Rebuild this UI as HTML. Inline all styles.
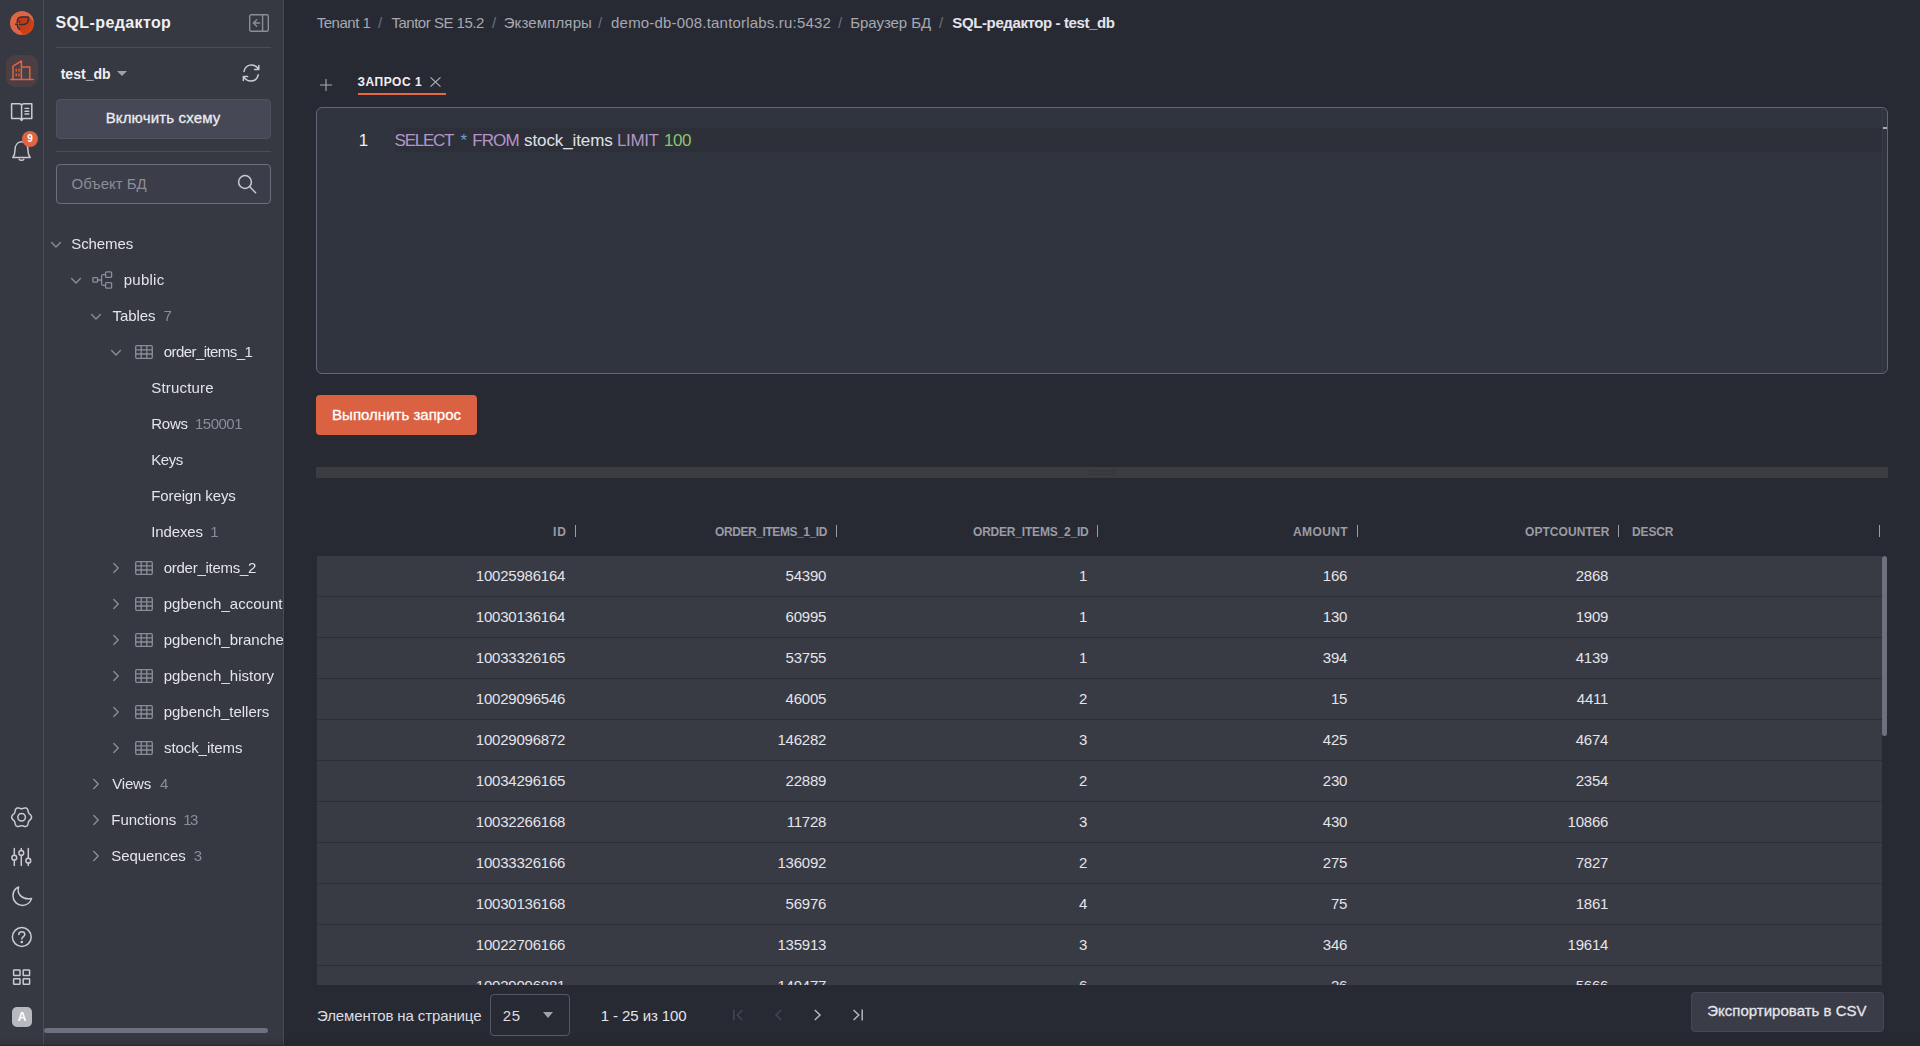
<!DOCTYPE html>
<html lang="ru">
<head>
<meta charset="utf-8">
<title>SQL-редактор - test_db</title>
<style>
*{box-sizing:border-box;margin:0;padding:0}
html,body{width:1920px;height:1046px;overflow:hidden;background:#282a33}
body{font-family:"Liberation Sans",sans-serif;color:#e4e4e9;font-size:15px;position:relative}
.abs{position:absolute}
.t{position:absolute;white-space:nowrap;line-height:20px;height:20px;font-size:15px;color:#e4e4e9}
svg{position:absolute;overflow:visible}
#rail{left:0;top:0;width:44px;height:1046px;background:#363842;border-right:1px solid #4a4c5b}
#side{left:44px;top:0;width:240px;height:1046px;background:#363842;border-right:1px solid #4a4c5b;overflow:hidden}
#main{left:284px;top:0;width:1636px;height:1046px;background:#282a33}
.ic{stroke:#c9cad3;fill:none;stroke-width:1.5;stroke-linecap:round;stroke-linejoin:round}
.hr{position:absolute;left:12px;width:215px;height:1px;background:#4a4c5b}
.chev{stroke:#8b8d97;fill:none;stroke-width:1.4;stroke-linecap:round;stroke-linejoin:round}
.tbl{stroke:#8b8d97;fill:none;stroke-width:1.3}
.row{position:absolute;left:33px;width:1565px;height:41px;background:#383a44;border-bottom:1px solid #2c2e37}
.c{top:10px;letter-spacing:-0.22px;margin-right:0.8px}
.sep{position:absolute;top:525px;width:1px;height:12px;background:#9a9ca6}
</style>
</head>
<body>
<div id="rail" class="abs">
<!-- logo -->
<svg style="left:10px;top:11px" width="24" height="24" viewBox="0 0 24 24">
<defs><linearGradient id="lg" x1="0" y1="0" x2="1" y2="1"><stop offset="0" stop-color="#b83614"/><stop offset="1" stop-color="#e2491a"/></linearGradient><clipPath id="lc"><circle cx="12" cy="12" r="12"/></clipPath></defs>
<circle cx="12" cy="12" r="12" fill="#de6443"/>
<g clip-path="url(#lc)"><path d="M7.5 8 L12 5.5 L18.6 5.5 L30 17 L18 30 L9.4 18.8 Z" fill="url(#lg)"/></g>
<path d="M9.6 18.3C8.2 17.6 7.5 15.6 7.3 13.4L5.6 13.2M7.2 11.8C7.1 8.4 8.4 6 11.4 5.9L17.2 5.9Q18.6 5.9 18.5 7.3L18.4 8.8C18 12 16.2 13.3 13.4 13.4L9.6 13.5" fill="none" stroke="#2e3040" stroke-width="1.5" stroke-linecap="round" stroke-linejoin="round"/>
<circle cx="9.6" cy="10.6" r="0.9" fill="#2e3040"/>
</svg>
<!-- active tile -->
<div class="abs" style="left:6px;top:55px;width:32px;height:32px;border-radius:9px;background:#4b3e44"></div>
<svg style="left:10px;top:59px" width="24" height="24" viewBox="0 0 24 24" fill="none" stroke="#e0653f" stroke-width="1.5" stroke-linejoin="round" stroke-linecap="round">
<path d="M0.8 20.6H23.2M3 20.6V7.2L11.4 2V20.6M11.4 8H19.8V20.6"/>
<path d="M6.2 10.2V12M9 10.2V12M6.2 15V16.8M9 15V16.8" stroke-width="1.3"/>
</svg>
<!-- book -->
<svg style="left:10px;top:100px" width="24" height="24" viewBox="0 0 24 24" class="ic">
<path d="M1.6 3.8H9.2C10.6 3.8 11.6 4.4 11.6 5.6V20.6L10 18.4H1.6ZM21.8 3.8H14C12.6 3.8 11.6 4.4 11.6 5.6V20.6L13.2 18.4H21.8Z"/>
<path d="M15 8.4H18.8M15 11.2H18.8M15 14H18.8" stroke-width="1.4"/>
</svg>
<!-- bell -->
<svg style="left:10px;top:139px" width="24" height="24" viewBox="0 0 24 24" class="ic">
<path d="M2.8 18.4H20.2C18.6 16.6 18 14.8 18 11.2C18 6.2 15.4 2.8 11.5 2.8C7.6 2.8 5 6.2 5 11.2C5 14.8 4.4 16.6 2.8 18.4Z"/>
<path d="M9.2 20.2C9.8 21.6 13.2 21.6 13.8 20.2"/>
</svg>
<div class="abs" style="left:22px;top:131px;width:16px;height:16px;border-radius:8px;background:#de6443"></div>
<div class="t" style="left:22px;top:129px;width:16px;text-align:center;font-size:10px;font-weight:bold;color:#fff">9</div>
<!-- gear -->
<svg style="left:10px;top:805px" width="24" height="24" viewBox="0 0 24 24" class="ic">
<path d="M21.55 12.20L21.46 12.87L21.20 13.51L20.81 14.11L20.34 14.64L19.84 15.11L19.37 15.55L18.97 15.98L18.66 16.44L18.43 16.95L18.27 17.53L18.15 18.17L18.00 18.86L17.79 19.55L17.50 20.19L17.09 20.74L16.58 21.16L15.97 21.42L15.31 21.51L14.62 21.45L13.94 21.29L13.30 21.08L12.70 20.88L12.14 20.73L11.60 20.68L11.06 20.73L10.50 20.88L9.90 21.08L9.26 21.29L8.58 21.45L7.89 21.51L7.23 21.42L6.63 21.16L6.11 20.74L5.70 20.19L5.41 19.55L5.20 18.86L5.05 18.17L4.93 17.53L4.77 16.95L4.54 16.44L4.23 15.98L3.83 15.55L3.36 15.11L2.86 14.64L2.39 14.11L2.00 13.51L1.74 12.87L1.65 12.20L1.74 11.53L2.00 10.89L2.39 10.29L2.86 9.76L3.36 9.29L3.83 8.85L4.23 8.42L4.54 7.96L4.77 7.45L4.93 6.87L5.05 6.23L5.20 5.54L5.41 4.85L5.70 4.21L6.11 3.66L6.62 3.24L7.23 2.98L7.89 2.89L8.58 2.95L9.26 3.11L9.90 3.32L10.50 3.52L11.06 3.67L11.60 3.72L12.14 3.67L12.70 3.52L13.30 3.32L13.94 3.11L14.62 2.95L15.31 2.89L15.97 2.98L16.58 3.24L17.09 3.66L17.50 4.21L17.79 4.85L18.00 5.54L18.15 6.23L18.27 6.87L18.43 7.45L18.66 7.96L18.97 8.42L19.37 8.85L19.84 9.29L20.34 9.76L20.81 10.29L21.20 10.89L21.46 11.53Z"/>
<circle cx="11.6" cy="12.2" r="3.8"/>
</svg>
<!-- sliders -->
<svg style="left:10px;top:845px" width="24" height="24" viewBox="0 0 24 24" class="ic">
<path d="M4.3 3.4V10.2M4.3 15.2V20.6M11.3 3.4V5.4M11.3 10.4V20.6M18.3 3.4V13.2M18.3 18.2V20.6"/>
<circle cx="4.3" cy="12.7" r="2.4"/><circle cx="11.3" cy="7.9" r="2.4"/><circle cx="18.3" cy="15.7" r="2.4"/>
</svg>
<!-- moon -->
<svg style="left:10px;top:884px" width="24" height="24" viewBox="0 0 24 24" class="ic">
<path d="M8.6 3C6.6 9.6 11.6 16.2 21.6 14.4C20.4 18.6 16.6 21.4 12.4 21.4C7.2 21.4 3 17.2 3 12C3 7.8 5.2 4.4 8.6 3Z"/>
</svg>
<!-- help -->
<svg style="left:10px;top:925px" width="24" height="24" viewBox="0 0 24 24" class="ic">
<circle cx="11.8" cy="12" r="9.4"/>
<path d="M8.8 9.6C8.8 7.8 10.2 6.8 11.8 6.8C13.4 6.8 14.8 7.8 14.8 9.4C14.8 11.6 11.8 11.6 11.8 14"/>
<circle cx="11.8" cy="17" r="0.6" fill="#c9cad3"/>
</svg>
<!-- grid -->
<svg style="left:10px;top:965px" width="24" height="24" viewBox="0 0 24 24" class="ic" stroke-linejoin="miter">
<rect x="3.6" y="4.9" width="6.4" height="5.6" rx="0.6"/><rect x="13.2" y="4.9" width="6.4" height="5.6" rx="0.6"/>
<rect x="3.6" y="13.7" width="6.4" height="5.6" rx="0.6"/><rect x="13.2" y="13.7" width="6.4" height="5.6" rx="0.6"/>
</svg>
<!-- avatar -->
<div class="abs" style="left:12px;top:1007px;width:20px;height:20px;border-radius:5px;background:#b8b9bf"></div>
<div class="t" style="left:12px;top:1007px;width:20px;text-align:center;font-size:12px;font-weight:bold;color:#fff">A</div>
</div>
<div id="side" class="abs">
<div id="t1" class="t" style="left:11.46px;top:13px;font-size:16px;color:#f0f0f3;font-weight:bold;letter-spacing:0.388px">SQL-редактор</div>
<svg style="left:205px;top:14px" width="20" height="18" viewBox="0 0 20 18" fill="none" stroke="#8b8d97" stroke-width="1.4" stroke-linecap="round" stroke-linejoin="round"><rect x="0.7" y="0.7" width="18.6" height="16.6" rx="1.5"/><path d="M13.6 0.7V17.3M10.6 9H4.6M7.6 5.8L4.4 9L7.6 12.2"/></svg>
<div class="hr" style="top:47px"></div>
<div id="t2" class="t" style="left:16.65px;top:64px;font-size:14px;color:#f0f0f3;font-weight:bold;letter-spacing:0.034px">test_db</div>
<svg style="left:73px;top:71px" width="10" height="5" viewBox="0 0 10 5"><path d="M0 0H10L5 5Z" fill="#a0a2ab"/></svg>
<svg style="left:197px;top:63px" width="20" height="20" viewBox="0 0 20 20" class="ic" stroke-width="1.4"><path d="M3 8.4C3.8 4.4 7 2 10.4 2C13.6 2 16 3.6 17.6 6.4M17.8 2.4V6.6H13.6"/><path d="M17.2 11.8C16.4 15.8 13.2 18 9.8 18C6.6 18 4.2 16.4 2.6 13.6M2.4 17.6V13.4H6.6"/></svg>
<div class="abs" style="left:12px;top:99px;width:215px;height:40px;border-radius:4px;background:#464855;border:1px solid #50525f"></div>
<div id="t3" class="t" style="left:61.65px;top:108px;color:#ececf0;letter-spacing:0.16px;-webkit-text-stroke:0.3px #ececf0">Включить схему</div>
<div class="hr" style="top:151px"></div>
<div class="abs" style="left:12px;top:164px;width:215px;height:40px;border-radius:4px;background:#3b3d48;border:1px solid #6d6f7e"></div>
<div id="t4" class="t" style="left:27.5px;top:174px;color:#8b8d97">Объект БД</div>
<svg style="left:192px;top:173px" width="22" height="22" viewBox="0 0 22 22" class="ic" stroke-width="1.5"><circle cx="9" cy="9" r="6.4"/><path d="M13.8 13.8L19.6 19.8"/></svg>
<div class="abs" style="left:0;top:220px;width:240px;height:800px;will-change:transform">
<svg style="left:7px;top:22px" width="10" height="6" viewBox="0 0 10 6" class="chev"><path d="M0.6 0.6L5 5L9.4 0.6"/></svg>
<div id="t5" class="t" style="left:27.24px;top:14px;letter-spacing:-0.083px">Schemes</div>
<svg style="left:27px;top:58px" width="10" height="6" viewBox="0 0 10 6" class="chev"><path d="M0.6 0.6L5 5L9.4 0.6"/></svg>
<svg style="left:48px;top:51px" width="22" height="18" viewBox="0 0 22 18" fill="none" stroke="#8b8d97" stroke-width="1.3" stroke-linejoin="round"><rect x="0.9" y="6.6" width="4.6" height="4.6" rx="0.8"/><rect x="13.6" y="0.8" width="6" height="5.6" rx="1"/><rect x="13.6" y="11.6" width="6" height="5.6" rx="1"/><path d="M5.5 9H9.6M13.6 3.6H11.2C10.2 3.6 9.6 4.2 9.6 5.2V12.8C9.6 13.8 10.2 14.4 11.2 14.4H13.6"/></svg>
<div id="t6" class="t" style="left:79.78px;top:50px;letter-spacing:0.248px">public</div>
<svg style="left:47px;top:94px" width="10" height="6" viewBox="0 0 10 6" class="chev"><path d="M0.6 0.6L5 5L9.4 0.6"/></svg>
<div id="t7" class="t" style="left:68.48px;top:86px;letter-spacing:-0.044px">Tables</div><div id="t8" class="t" style="left:119.56px;top:86px;color:#8b8d97">7</div>
<svg style="left:67px;top:130px" width="10" height="6" viewBox="0 0 10 6" class="chev"><path d="M0.6 0.6L5 5L9.4 0.6"/></svg>
<svg style="left:91px;top:125px" width="18" height="14" viewBox="0 0 18 14" class="tbl"><rect x="0.7" y="0.7" width="16.6" height="12.6" rx="1"/><path d="M0.7 4.8H17.3M0.7 9H17.3M6.2 0.7V13.3M11.8 0.7V13.3"/></svg>
<div id="t9" class="t" style="left:119.76px;top:122px;letter-spacing:-0.567px">order_items_1</div>
<div id="t10" class="t" style="left:107.26px;top:158px;letter-spacing:0.185px">Structure</div>
<div id="t11" class="t" style="left:107.26px;top:194px;letter-spacing:-0.246px">Rows</div><div id="t12" class="t" style="left:151.0px;top:194px;color:#8b8d97;letter-spacing:-0.508px">150001</div>
<div id="t13" class="t" style="left:107.26px;top:230px;letter-spacing:-0.427px">Keys</div>
<div id="t14" class="t" style="left:107.26px;top:266px;letter-spacing:-0.116px">Foreign keys</div>
<div id="t15" class="t" style="left:107.26px;top:302px;letter-spacing:-0.13px">Indexes</div><div id="t16" class="t" style="left:166.36px;top:302px;color:#8b8d97">1</div>
<svg style="left:69px;top:343px" width="6" height="10" viewBox="0 0 6 10" class="chev"><path d="M0.8 0.6L5.2 5L0.8 9.4"/></svg>
<svg style="left:91px;top:341px" width="18" height="14" viewBox="0 0 18 14" class="tbl"><rect x="0.7" y="0.7" width="16.6" height="12.6" rx="1"/><path d="M0.7 4.8H17.3M0.7 9H17.3M6.2 0.7V13.3M11.8 0.7V13.3"/></svg>
<div id="t17" class="t" style="left:119.76px;top:338px;letter-spacing:-0.275px">order_items_2</div>
<svg style="left:69px;top:379px" width="6" height="10" viewBox="0 0 6 10" class="chev"><path d="M0.8 0.6L5.2 5L0.8 9.4"/></svg>
<svg style="left:91px;top:377px" width="18" height="14" viewBox="0 0 18 14" class="tbl"><rect x="0.7" y="0.7" width="16.6" height="12.6" rx="1"/><path d="M0.7 4.8H17.3M0.7 9H17.3M6.2 0.7V13.3M11.8 0.7V13.3"/></svg>
<div id="t18" class="t" style="left:119.76px;top:374px;letter-spacing:0.018px">pgbench_accounts</div>
<svg style="left:69px;top:415px" width="6" height="10" viewBox="0 0 6 10" class="chev"><path d="M0.8 0.6L5.2 5L0.8 9.4"/></svg>
<svg style="left:91px;top:413px" width="18" height="14" viewBox="0 0 18 14" class="tbl"><rect x="0.7" y="0.7" width="16.6" height="12.6" rx="1"/><path d="M0.7 4.8H17.3M0.7 9H17.3M6.2 0.7V13.3M11.8 0.7V13.3"/></svg>
<div id="t19" class="t" style="left:119.76px;top:410px;letter-spacing:-0.002px">pgbench_branches</div>
<svg style="left:69px;top:451px" width="6" height="10" viewBox="0 0 6 10" class="chev"><path d="M0.8 0.6L5.2 5L0.8 9.4"/></svg>
<svg style="left:91px;top:449px" width="18" height="14" viewBox="0 0 18 14" class="tbl"><rect x="0.7" y="0.7" width="16.6" height="12.6" rx="1"/><path d="M0.7 4.8H17.3M0.7 9H17.3M6.2 0.7V13.3M11.8 0.7V13.3"/></svg>
<div id="t20" class="t" style="left:119.76px;top:446px;letter-spacing:0.018px">pgbench_history</div>
<svg style="left:69px;top:487px" width="6" height="10" viewBox="0 0 6 10" class="chev"><path d="M0.8 0.6L5.2 5L0.8 9.4"/></svg>
<svg style="left:91px;top:485px" width="18" height="14" viewBox="0 0 18 14" class="tbl"><rect x="0.7" y="0.7" width="16.6" height="12.6" rx="1"/><path d="M0.7 4.8H17.3M0.7 9H17.3M6.2 0.7V13.3M11.8 0.7V13.3"/></svg>
<div id="t21" class="t" style="left:119.76px;top:482px;letter-spacing:-0.034px">pgbench_tellers</div>
<svg style="left:69px;top:523px" width="6" height="10" viewBox="0 0 6 10" class="chev"><path d="M0.8 0.6L5.2 5L0.8 9.4"/></svg>
<svg style="left:91px;top:521px" width="18" height="14" viewBox="0 0 18 14" class="tbl"><rect x="0.7" y="0.7" width="16.6" height="12.6" rx="1"/><path d="M0.7 4.8H17.3M0.7 9H17.3M6.2 0.7V13.3M11.8 0.7V13.3"/></svg>
<div id="t22" class="t" style="left:119.96px;top:518px;letter-spacing:-0.07px">stock_items</div>
<svg style="left:49px;top:559px" width="6" height="10" viewBox="0 0 6 10" class="chev"><path d="M0.8 0.6L5.2 5L0.8 9.4"/></svg>
<div id="t23" class="t" style="left:68.26px;top:554px;letter-spacing:-0.2px">Views</div><div id="t24" class="t" style="left:115.92px;top:554px;color:#8b8d97">4</div>
<svg style="left:49px;top:595px" width="6" height="10" viewBox="0 0 6 10" class="chev"><path d="M0.8 0.6L5.2 5L0.8 9.4"/></svg>
<div id="t25" class="t" style="left:67.26px;top:590px;letter-spacing:0.003px">Functions</div><div id="t26" class="t" style="left:139.36px;top:590px;color:#8b8d97;letter-spacing:-1.76px">13</div>
<svg style="left:49px;top:631px" width="6" height="10" viewBox="0 0 6 10" class="chev"><path d="M0.8 0.6L5.2 5L0.8 9.4"/></svg>
<div id="t27" class="t" style="left:67.26px;top:626px;letter-spacing:-0.06px">Sequences</div><div id="t28" class="t" style="left:149.64px;top:626px;color:#8b8d97">3</div>
</div>
<div class="abs" style="left:0;top:1028px;width:224px;height:5px;border-radius:3px;background:#6e7080"></div>
</div>
<div id="main" class="abs">
<div class="abs" style="left:0;top:0;width:1px;height:1046px;background:#25272f"></div>
<div id="t29" class="t" style="left:32.64px;top:13px;color:#a6a8b2;letter-spacing:-0.465px">Tenant 1</div>
<div id="t30" class="t" style="left:107.44px;top:13px;color:#a6a8b2;letter-spacing:-0.486px">Tantor SE 15.2</div>
<div id="t31" class="t" style="left:219.64px;top:13px;color:#a6a8b2;letter-spacing:0.142px">Экземпляры</div>
<div id="t32" class="t" style="left:327.08px;top:13px;color:#a6a8b2;letter-spacing:0.187px">demo-db-008.tantorlabs.ru:5432</div>
<div id="t33" class="t" style="left:566.28px;top:13px;color:#a6a8b2;letter-spacing:-0.053px">Браузер БД</div>
<div id="t34" class="t" style="left:94px;top:13px;color:#6e707b">/</div>
<div id="t35" class="t" style="left:208px;top:13px;color:#6e707b">/</div>
<div id="t36" class="t" style="left:314px;top:13px;color:#6e707b">/</div>
<div id="t37" class="t" style="left:554px;top:13px;color:#6e707b">/</div>
<div id="t38" class="t" style="left:655px;top:13px;color:#6e707b">/</div>
<div id="t39" class="t" style="left:668.36px;top:13px;font-weight:bold;letter-spacing:-0.393px">SQL-редактор - test_db</div>
<svg style="left:36px;top:79px" width="12" height="12" viewBox="0 0 12 12" fill="none" stroke="#a9abb5" stroke-width="1.1"><path d="M6 0V12M0 6H12"/></svg>
<div id="t40" class="t" style="left:73.46px;top:72px;font-size:12px;color:#f0f0f3;font-weight:bold;letter-spacing:0.537px">ЗАПРОС 1</div>
<svg style="left:146px;top:77px" width="11" height="10" viewBox="0 0 11 10" fill="none" stroke="#b4b6bf" stroke-width="1.1"><path d="M0.5 0.3L10.5 9.7M10.5 0.3L0.5 9.7"/></svg>
<div class="abs" style="left:74px;top:93px;width:88px;height:2px;background:#e9683f"></div>
<div class="abs" style="left:32px;top:107px;width:1572px;height:267px;border:1px solid #636677;border-radius:6px;background:#30343e;overflow:hidden"><div class="abs" style="left:78px;top:20px;width:1488px;height:24px;background:#2d3039"></div><div class="abs" style="left:1565px;top:0;width:1px;height:265px;background:#3a3d48"></div><div class="abs" style="left:1566px;top:19px;width:5px;height:2px;background:#a9a9a9"></div><div id="t41" class="t" style="left:41.78px;top:23px;font-size:17px;color:#eeeef2">1</div><div id="t42" class="t" style="left:77.56px;top:23px;font-size:17px;color:#b595c9;letter-spacing:-1.252px">SELECT</div><div id="t43" class="t" style="left:143.44px;top:23px;font-size:17px;color:#6aa0d6">*</div><div id="t44" class="t" style="left:155.28px;top:23px;font-size:17px;color:#b595c9;letter-spacing:-0.907px">FROM</div><div id="t45" class="t" style="left:207.08px;top:23px;font-size:17px;color:#e0e0e5;letter-spacing:-0.113px">stock_items</div><div id="t46" class="t" style="left:300.0px;top:23px;font-size:17px;color:#b595c9;letter-spacing:-0.37px">LIMIT</div><div id="t47" class="t" style="left:347.0px;top:23px;font-size:17px;color:#8cc56b;letter-spacing:-0.5px">100</div></div>
<div class="abs" style="left:32px;top:395px;width:161px;height:40px;border-radius:4px;background:#da6242"></div>
<div id="t48" class="t" style="left:48.08px;top:405px;color:#fff;letter-spacing:0.017px;-webkit-text-stroke:0.3px #fff">Выполнить запрос</div>
<div class="abs" style="left:32px;top:467px;width:1572px;height:11px;background:#3b3c42"></div>
<svg style="left:806px;top:470px" width="26" height="6" viewBox="0 0 26 6" fill="#33343a"><rect x="0.4" y="0.2" width="1.6" height="1.6"/><rect x="3.6" y="0.2" width="1.6" height="1.6"/><rect x="6.8" y="0.2" width="1.6" height="1.6"/><rect x="10.0" y="0.2" width="1.6" height="1.6"/><rect x="13.2" y="0.2" width="1.6" height="1.6"/><rect x="16.4" y="0.2" width="1.6" height="1.6"/><rect x="19.6" y="0.2" width="1.6" height="1.6"/><rect x="22.8" y="0.2" width="1.6" height="1.6"/><rect x="0.4" y="3.4" width="1.6" height="1.6"/><rect x="3.6" y="3.4" width="1.6" height="1.6"/><rect x="6.8" y="3.4" width="1.6" height="1.6"/><rect x="10.0" y="3.4" width="1.6" height="1.6"/><rect x="13.2" y="3.4" width="1.6" height="1.6"/><rect x="16.4" y="3.4" width="1.6" height="1.6"/><rect x="19.6" y="3.4" width="1.6" height="1.6"/><rect x="22.8" y="3.4" width="1.6" height="1.6"/></svg>
<div id="t49" class="t" style="left:269.0px;top:522px;font-size:12px;color:#9a9ca6;font-weight:bold;letter-spacing:1.0px">ID</div>
<div id="t50" class="t" style="left:431.0px;top:522px;font-size:12px;color:#9a9ca6;font-weight:bold;letter-spacing:-0.42px">ORDER_ITEMS_1_ID</div>
<div id="t51" class="t" style="left:689.0px;top:522px;font-size:12px;color:#9a9ca6;font-weight:bold;letter-spacing:-0.2px">ORDER_ITEMS_2_ID</div>
<div id="t52" class="t" style="left:1009.0px;top:522px;font-size:12px;color:#9a9ca6;font-weight:bold;letter-spacing:0.4px">AMOUNT</div>
<div id="t53" class="t" style="left:1241.0px;top:522px;font-size:12px;color:#9a9ca6;font-weight:bold;letter-spacing:0.056px">OPTCOUNTER</div>
<div id="t54" class="t" style="left:1348.0px;top:522px;font-size:12px;color:#9a9ca6;font-weight:bold;letter-spacing:-0.125px">DESCR</div>
<div class="sep" style="left:291px"></div>
<div class="sep" style="left:552px"></div>
<div class="sep" style="left:813px"></div>
<div class="sep" style="left:1073px"></div>
<div class="sep" style="left:1334px"></div>
<div class="sep" style="left:1595px"></div>
<div class="abs" style="left:0;top:556px;width:1636px;height:429px;overflow:hidden">
<div class="row" style="top:0px"><div class="t c" style="right:1316px">10025986164</div><div class="t c" style="right:1055px">54390</div><div class="t c" style="right:794px">1</div><div class="t c" style="right:534px">166</div><div class="t c" style="right:273px">2868</div></div>
<div class="row" style="top:41px"><div class="t c" style="right:1316px">10030136164</div><div class="t c" style="right:1055px">60995</div><div class="t c" style="right:794px">1</div><div class="t c" style="right:534px">130</div><div class="t c" style="right:273px">1909</div></div>
<div class="row" style="top:82px"><div class="t c" style="right:1316px">10033326165</div><div class="t c" style="right:1055px">53755</div><div class="t c" style="right:794px">1</div><div class="t c" style="right:534px">394</div><div class="t c" style="right:273px">4139</div></div>
<div class="row" style="top:123px"><div class="t c" style="right:1316px">10029096546</div><div class="t c" style="right:1055px">46005</div><div class="t c" style="right:794px">2</div><div class="t c" style="right:534px">15</div><div class="t c" style="right:273px">4411</div></div>
<div class="row" style="top:164px"><div class="t c" style="right:1316px">10029096872</div><div class="t c" style="right:1055px">146282</div><div class="t c" style="right:794px">3</div><div class="t c" style="right:534px">425</div><div class="t c" style="right:273px">4674</div></div>
<div class="row" style="top:205px"><div class="t c" style="right:1316px">10034296165</div><div class="t c" style="right:1055px">22889</div><div class="t c" style="right:794px">2</div><div class="t c" style="right:534px">230</div><div class="t c" style="right:273px">2354</div></div>
<div class="row" style="top:246px"><div class="t c" style="right:1316px">10032266168</div><div class="t c" style="right:1055px">11728</div><div class="t c" style="right:794px">3</div><div class="t c" style="right:534px">430</div><div class="t c" style="right:273px">10866</div></div>
<div class="row" style="top:287px"><div class="t c" style="right:1316px">10033326166</div><div class="t c" style="right:1055px">136092</div><div class="t c" style="right:794px">2</div><div class="t c" style="right:534px">275</div><div class="t c" style="right:273px">7827</div></div>
<div class="row" style="top:328px"><div class="t c" style="right:1316px">10030136168</div><div class="t c" style="right:1055px">56976</div><div class="t c" style="right:794px">4</div><div class="t c" style="right:534px">75</div><div class="t c" style="right:273px">1861</div></div>
<div class="row" style="top:369px"><div class="t c" style="right:1316px">10022706166</div><div class="t c" style="right:1055px">135913</div><div class="t c" style="right:794px">3</div><div class="t c" style="right:534px">346</div><div class="t c" style="right:273px">19614</div></div>
<div class="row" style="top:410px"><div class="t c" style="right:1316px">10029096881</div><div class="t c" style="right:1055px">149477</div><div class="t c" style="right:794px">6</div><div class="t c" style="right:534px">26</div><div class="t c" style="right:273px">5666</div></div>
</div>
<div class="abs" style="left:1598px;top:556px;width:5px;height:180px;border-radius:3px;background:#6e7080"></div>
<div id="t55" class="t" style="left:33.0px;top:1006px;color:#dcdde2;letter-spacing:-0.113px">Элементов на странице</div>
<div class="abs" style="left:206px;top:994px;width:80px;height:42px;border-radius:4px;border:1px solid #555866"></div>
<div id="t56" class="t" style="left:218.64px;top:1006px;color:#dcdde2;letter-spacing:0.8px">25</div>
<svg style="left:259px;top:1012px" width="10" height="6" viewBox="0 0 10 6"><path d="M0 0H10L5 6Z" fill="#a0a2ab"/></svg>
<div id="t57" class="t" style="left:316.72px;top:1006px;letter-spacing:-0.085px">1 - 25 из 100</div>
<svg style="left:449px;top:1009px" width="10" height="12" viewBox="0 0 10 12" fill="none" stroke="#444752" stroke-width="1.5"><path d="M0.8 0.6V11.4M9.4 1L4.2 6L9.4 11"/></svg>
<svg style="left:491px;top:1009px" width="7" height="12" viewBox="0 0 7 12" fill="none" stroke="#444752" stroke-width="1.5"><path d="M6.2 1L1 6L6.2 11"/></svg>
<svg style="left:530px;top:1009px" width="7" height="12" viewBox="0 0 7 12" fill="none" stroke="#b4b6bf" stroke-width="1.5"><path d="M0.8 1L6 6L0.8 11"/></svg>
<svg style="left:569px;top:1009px" width="10" height="12" viewBox="0 0 10 12" fill="none" stroke="#b4b6bf" stroke-width="1.5"><path d="M9.2 0.6V11.4M0.6 1L5.8 6L0.6 11"/></svg>
<div class="abs" style="left:1407px;top:992px;width:193px;height:40px;border-radius:4px;background:#3a3c47;border:1px solid #464855"></div>
<div id="t58" class="t" style="left:1423.28px;top:1001px;letter-spacing:0.015px;-webkit-text-stroke:0.3px #e4e4e9">Экспортировать в CSV</div>
</div>
<div class="abs" style="left:0;top:1037px;width:1920px;height:9px;background:linear-gradient(to bottom,rgba(0,0,0,0),rgba(0,0,0,0.13))"></div><div class="abs" style="left:0;top:1045px;width:1920px;height:1px;background:#2a2a2b"></div>
</body>
</html>
